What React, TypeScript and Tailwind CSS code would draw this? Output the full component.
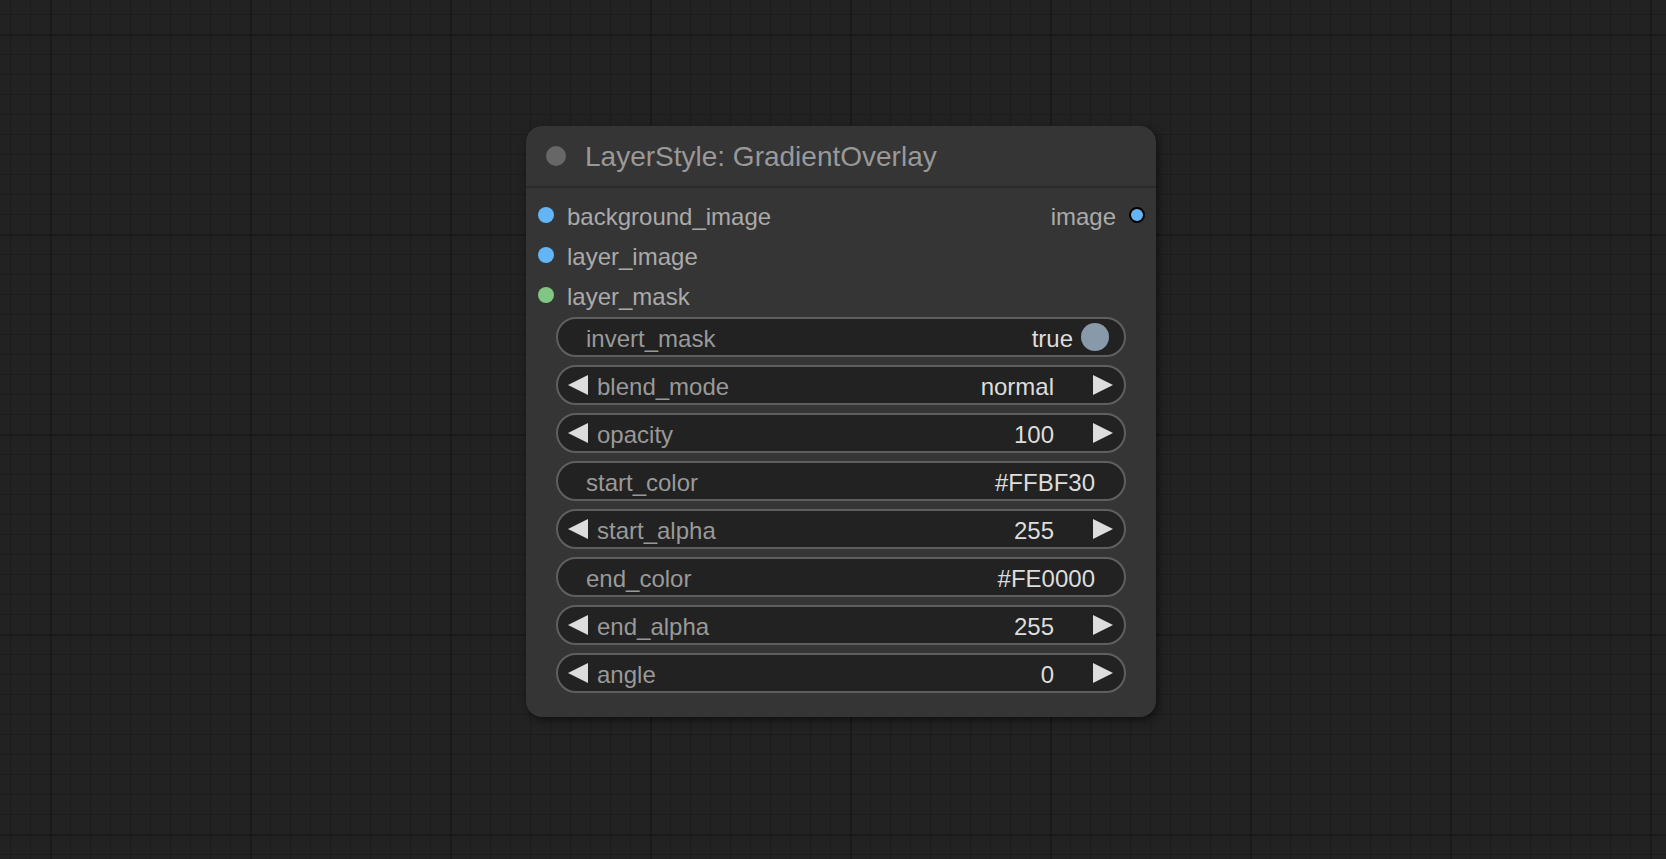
type Widget =
  | { kind: "toggle"; label: string; value: string }
  | { kind: "number"; label: string; value: string }
  | { kind: "text"; label: string; value: string };

const widgets: Widget[] = [
  { kind: "toggle", label: "invert_mask", value: "true" },
  { kind: "number", label: "blend_mode", value: "normal" },
  { kind: "number", label: "opacity", value: "100" },
  { kind: "text", label: "start_color", value: "#FFBF30" },
  { kind: "number", label: "start_alpha", value: "255" },
  { kind: "text", label: "end_color", value: "#FE0000" },
  { kind: "number", label: "end_alpha", value: "255" },
  { kind: "number", label: "angle", value: "0" },
];

const inputs = [
  { name: "background_image", color: "bg-[#64b5f6]" },
  { name: "layer_image", color: "bg-[#64b5f6]" },
  { name: "layer_mask", color: "bg-[#81c784]" },
];

function Arrow({ dir }: { dir: "left" | "right" }) {
  return (
    <svg width="20" height="20" viewBox="0 0 20 20" className="shrink-0">
      <polygon points={dir === "left" ? "20,0 20,20 0,10" : "0,0 0,20 20,10"} fill="#dddddd" />
    </svg>
  );
}

function WidgetRow({ w }: { w: Widget }) {
  const base =
    "flex h-10 items-center rounded-full border-2 border-[#5f5f5f] bg-[#222222] text-[24px] leading-none";

  if (w.kind === "toggle") {
    return (
      <div className={`${base} pl-[28px] pr-[15px]`}>
        <span className="pt-[3px] text-[#999999]">{w.label}</span>
        <span className="ml-auto pt-[3px] text-[#dddddd]">{w.value}</span>
        <span className="ml-[8px] h-[28px] w-[28px] rounded-full bg-[#8899aa]" />
      </div>
    );
  }

  if (w.kind === "text") {
    return (
      <div className={`${base} pl-[28px] pr-[29px]`}>
        <span className="pt-[3px] text-[#999999]">{w.label}</span>
        <span className="ml-auto pt-[3px] text-[#dddddd]">{w.value}</span>
      </div>
    );
  }

  return (
    <div className={`${base} pl-[10px] pr-[11px]`}>
      <Arrow dir="left" />
      <span className="ml-[9px] pt-[3px] text-[#999999]">{w.label}</span>
      <span className="ml-auto mr-[39px] pt-[3px] text-[#dddddd]">{w.value}</span>
      <Arrow dir="right" />
    </div>
  );
}

export default function App() {
  return (
    <div
      className="relative h-screen w-full overflow-hidden bg-[#222222] bg-[linear-gradient(to_right,#1a1a1a_2px,transparent_2px),linear-gradient(to_bottom,#1a1a1a_2px,transparent_2px),linear-gradient(to_right,#1c1c1c_1px,transparent_1px),linear-gradient(to_bottom,#1c1c1c_1px,transparent_1px)] bg-[size:200px_200px,200px_200px,20px_20px,20px_20px] bg-[position:50px_34px,50px_34px,10px_14px,10px_14px]"
      style={{ fontFamily: '"Liberation Sans", Arial, sans-serif' }}
    >
      <div className="absolute left-[526px] top-[126px] flex w-[630px] flex-col rounded-2xl bg-[#353535] shadow-[2px_3px_8px_rgba(0,0,0,0.55)]">
        {/* title */}
        <div className="flex h-[62px] items-center border-b-2 border-[#2b2b2b] pl-[20px]">
          <span className="h-5 w-5 rounded-full bg-[#676767]" />
          <span className="ml-[19px] pt-[2px] text-[28px] leading-none text-[#999999]">LayerStyle: GradientOverlay</span>
        </div>

        {/* slots */}
        <div className="flex pt-[7px]">
          <div className="flex flex-col">
            {inputs.map((s) => (
              <div key={s.name} className="flex h-10 items-center pl-3">
                <span className={`h-4 w-4 rounded-full ${s.color}`} />
                <span className="ml-[13px] pt-[3px] text-[24px] leading-none text-[#aaaaaa]">{s.name}</span>
              </div>
            ))}
          </div>
          <div className="ml-auto flex h-10 items-center pr-[11px]">
            <span className="mr-[13px] pt-[3px] text-[24px] leading-none text-[#aaaaaa]">image</span>
            <span className="h-4 w-4 rounded-full border-2 border-black bg-[#64b5f6]" />
          </div>
        </div>

        {/* widgets */}
        <div className="mt-[2px] flex flex-col gap-2 px-[30px] pb-[24px]">
          {widgets.map((w) => (
            <WidgetRow key={w.label} w={w} />
          ))}
        </div>
      </div>
    </div>
  );
}
